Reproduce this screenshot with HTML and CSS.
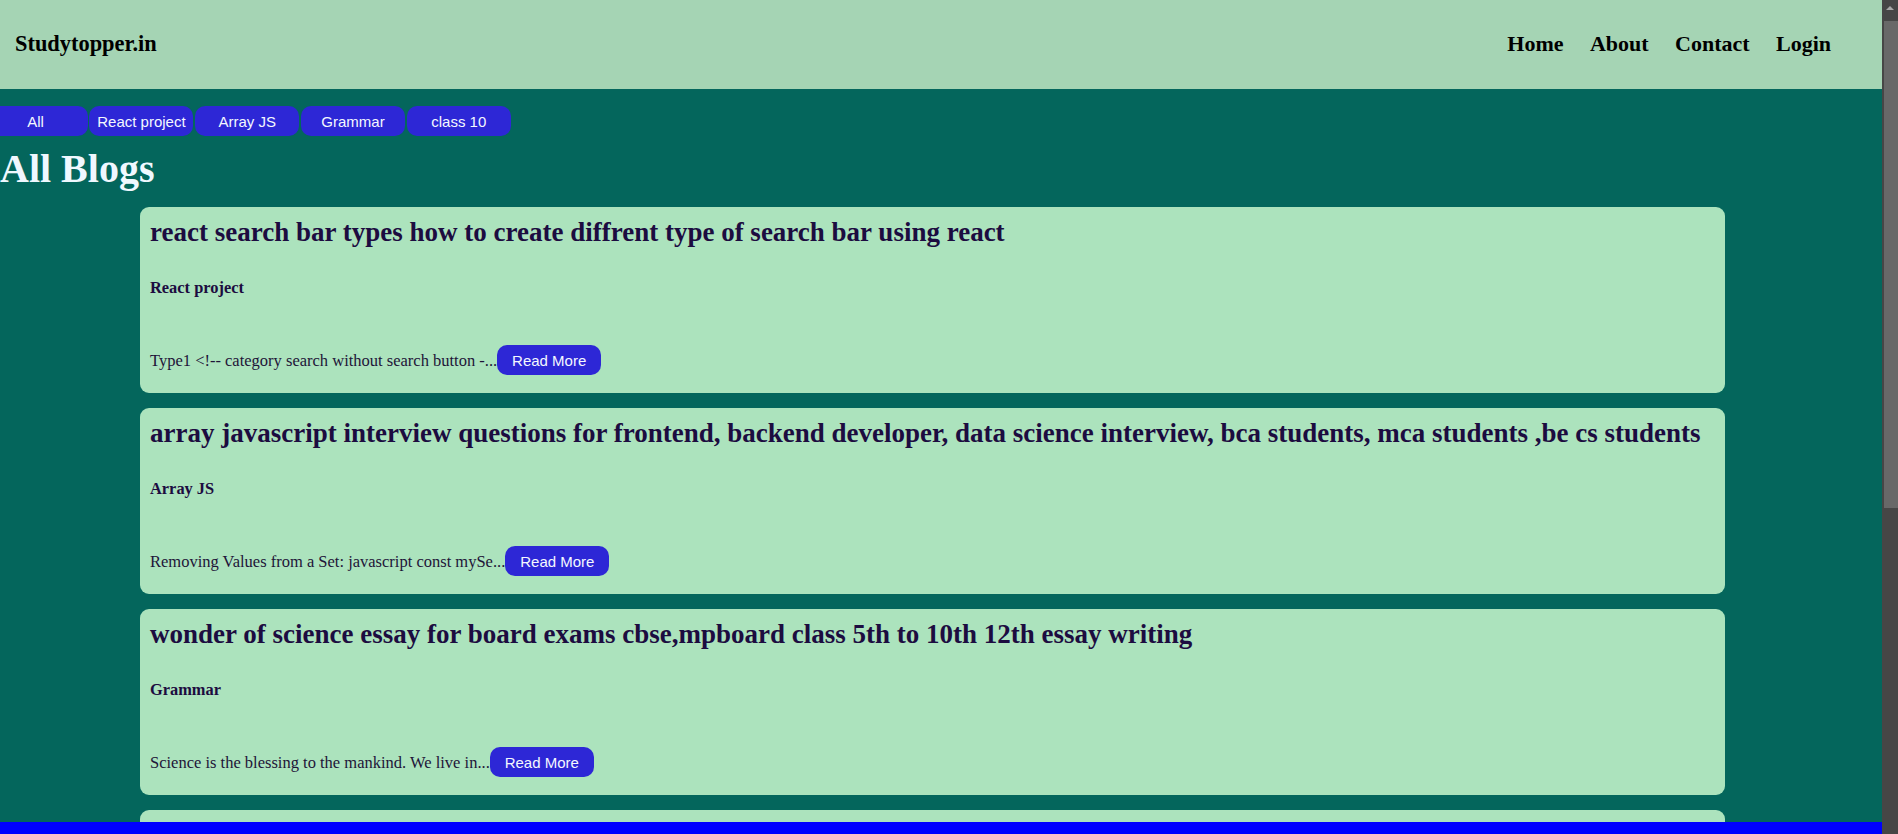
FILE: index.html
```html
<!DOCTYPE html>
<html lang="en">
<head>
<meta charset="utf-8">
<title>Studytopper.in - All Blogs</title>
<link rel="stylesheet" href="styles.css">
</head>
<body>
<div class="viewport">
  <div class="page">
    <header class="topbar">
      <div class="logo">Studytopper.in</div>
      <nav class="nav">
        <a href="#">Home</a>
        <a href="#">About</a>
        <a href="#">Contact</a>
        <a href="#">Login</a>
      </nav>
    </header>
    <main class="content">
      <div class="filters">
        <button class="chip chip-first">All</button>
        <button class="chip">React project</button>
        <button class="chip">Array JS</button>
        <button class="chip">Grammar</button>
        <button class="chip">class 10</button>
      </div>
      <h1 class="page-title">All Blogs</h1>
      <div class="blog-list">
        <article class="card">
          <h2 class="card-title">react search bar types how to create diffrent type of search bar using react</h2>
          <h4 class="card-cat">React project</h4>
          <p class="card-text">Type1 &lt;!-- category search without search button -...<button class="chip">Read More</button></p>
        </article>
        <article class="card">
          <h2 class="card-title">array javascript interview questions for frontend, backend developer, data science interview, bca students, mca students ,be cs students</h2>
          <h4 class="card-cat">Array JS</h4>
          <p class="card-text">Removing Values from a Set: javascript const mySe...<button class="chip">Read More</button></p>
        </article>
        <article class="card">
          <h2 class="card-title">wonder of science essay for board exams cbse,mpboard class 5th to 10th 12th essay writing</h2>
          <h4 class="card-cat">Grammar</h4>
          <p class="card-text">Science is the blessing to the mankind. We live in...<button class="chip">Read More</button></p>
        </article>
        <article class="card card-placeholder"></article>
      </div>
    </main>
    <footer class="bottom-bar"></footer>
  </div>
  <div class="scrollbar">
    <div class="scroll-up"><span class="scroll-arrow"></span></div>
    <div class="scroll-thumb"></div>
  </div>
</div>
</body>
</html>
```

FILE: styles.css
```css
html, body {
  margin: 0;
  padding: 0;
  height: 100%;
  overflow: hidden;
}

body {
  font-family: "Liberation Serif", "Times New Roman", serif;
  background: #04665c;
}

.viewport {
  display: flex;
  width: 1898px;
  height: 834px;
}

.page {
  flex: 1;
  min-width: 0;
  display: flex;
  flex-direction: column;
  background: #04665c;
}

.topbar {
  flex: none;
  box-sizing: border-box;
  height: 89px;
  background: #a5d4b4;
  display: flex;
  align-items: center;
  justify-content: space-between;
  padding: 0 51px 2px 15px;
}

.logo {
  font-size: 22.4px;
  font-weight: bold;
  color: #000;
}

.nav {
  display: flex;
  gap: 26.4px;
}

.nav a {
  font-size: 22px;
  font-weight: bold;
  color: #000;
  text-decoration: none;
}

.content {
  flex: 1;
  min-height: 0;
  overflow: hidden;
}

.filters {
  display: flex;
  gap: 1.8px;
  margin: 17px 0 0 -16.4px;
}

.chip {
  flex: none;
  width: 104px;
  height: 30px;
  padding: 0;
  border: none;
  border-radius: 10px;
  background: #2d27d6;
  color: #f4f8ff;
  font-family: "Liberation Sans", Arial, sans-serif;
  font-size: 15px;
  cursor: pointer;
}

.page-title {
  margin: 9px 0 15px;
  font-size: 40px;
  font-weight: bold;
  color: #f0f8ff;
}

.blog-list {
  display: flex;
  flex-direction: column;
  gap: 15px;
  padding-left: 140px;
}

.card {
  flex: none;
  width: 1585px;
  box-sizing: border-box;
  background: #ace3bd;
  border-radius: 9px;
  padding: 10px 10px 18px;
  color: #1c0c40;
}

.card-placeholder {
  height: 186px;
}

.card-title {
  margin: 0 0 32px;
  font-size: 27px;
  line-height: 30px;
  font-weight: bold;
}

.card-cat {
  margin: 0 0 48px;
  font-size: 16.4px;
  line-height: 18px;
  font-weight: bold;
}

.card-text {
  margin: 0;
  font-size: 16.5px;
  color: #1e1438;
}

.bottom-bar {
  flex: none;
  height: 12px;
  background: #0000ff;
}

.scrollbar {
  flex: none;
  width: 16px;
  height: 100%;
  background: #464646;
  display: flex;
  flex-direction: column;
  align-items: flex-end;
}

.scroll-up {
  height: 21px;
  width: 16px;
  display: flex;
  justify-content: center;
  padding-top: 6px;
  box-sizing: border-box;
}

.scroll-arrow {
  width: 0;
  height: 0;
  border-left: 4px solid transparent;
  border-right: 4px solid transparent;
  border-bottom: 4px solid #a8a8a8;
}

.scroll-thumb {
  width: 14px;
  height: 487px;
  background: #686868;
}
```
